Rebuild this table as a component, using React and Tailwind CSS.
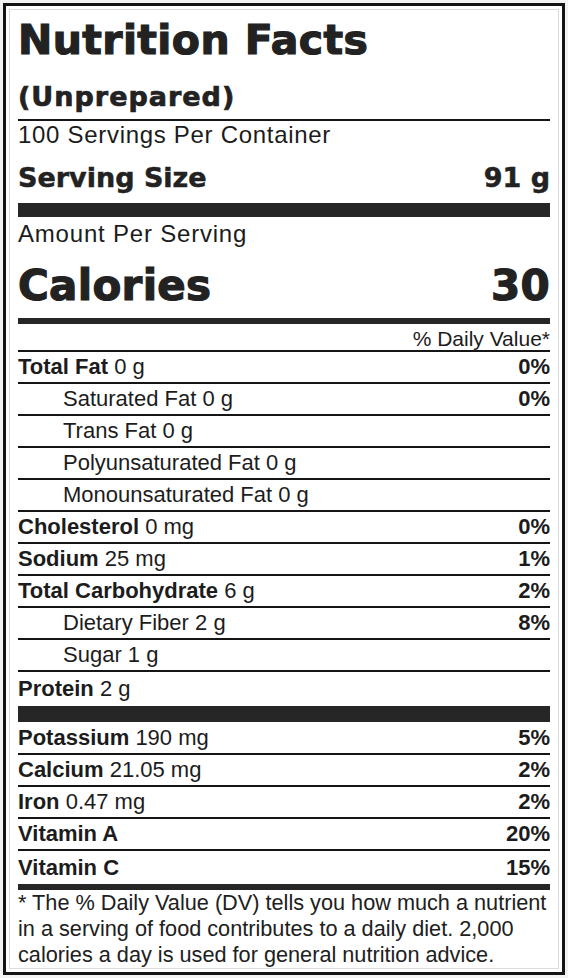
const rows = [
  { label: "Total Fat", amount: "0 g", dv: "0%" },
  { label: "Saturated Fat", amount: "0 g", dv: "0%", indent: true },
  { label: "Trans Fat", amount: "0 g", indent: true },
  { label: "Polyunsaturated Fat", amount: "0 g", indent: true },
  { label: "Monounsaturated Fat", amount: "0 g", indent: true },
  { label: "Cholesterol", amount: "0 mg", dv: "0%" },
  { label: "Sodium", amount: "25 mg", dv: "1%" },
  { label: "Total Carbohydrate", amount: "6 g", dv: "2%" },
  { label: "Dietary Fiber", amount: "2 g", dv: "8%", indent: true },
  { label: "Sugar", amount: "1 g", indent: true },
];

const minerals = [
  { label: "Potassium", amount: "190 mg", dv: "5%", h: "h-[33px] leading-[31px]" },
  { label: "Calcium", amount: "21.05 mg", dv: "2%" },
  { label: "Iron", amount: "0.47 mg", dv: "2%" },
  { label: "Vitamin A", dv: "20%" },
];

const heavy = { fontFamily: '"DejaVu Sans", "Liberation Sans", sans-serif' };
const body = { fontFamily: '"Liberation Sans", Arial, sans-serif' };

function Row({ r, cls = "h-[32px] leading-[30px]", border = true }) {
  return (
    <div
      className={`flex justify-between text-[22px] ${cls} ${
        border ? "border-b-2 border-[#151515]" : ""
      } ${r.indent ? "pl-[45px]" : ""}`}
    >
      <span className="whitespace-nowrap">
        {r.indent ? r.label : <span className="font-bold">{r.label}</span>}
        {r.amount ? " " + r.amount : ""}
      </span>
      {r.dv && <span className="font-bold">{r.dv}</span>}
    </div>
  );
}

export default function App() {
  return (
    <div className="w-[568px] h-[978px] bg-[#f3f3f3] p-[3px]" style={body}>
      <div className="h-full border-[3px] border-[#141414] bg-white p-[3px]">
        <div className="h-full border border-[#dcdcdc] bg-white px-[8px] text-[#1c1c1c]">
          <div
            className="h-[60px] text-[41px] leading-[60px] font-bold text-[#222] tracking-[0.4px] [-webkit-text-stroke:1.2px_#222]"
            style={heavy}
          >
            Nutrition Facts
          </div>
          <div
            className="h-[51px] pt-[4px] text-[27px] leading-[45px] font-bold text-[#222] tracking-[1px] border-b-2 border-[#151515] [-webkit-text-stroke:0.7px_#222]"
            style={heavy}
          >
            (Unprepared)
          </div>
          <div className="h-[28px] text-[24px] leading-[28px] tracking-[0.7px]">
            100 Servings Per Container
          </div>
          <div
            className="flex justify-between h-[54px] pt-[4px] text-[27px] leading-[50px] font-bold text-[#222] [-webkit-text-stroke:0.5px_#222]"
            style={heavy}
          >
            <span>Serving Size</span>
            <span>91 g</span>
          </div>
          <div className="h-[14px] bg-[#262626]" />
          <div className="h-[33px] text-[24px] leading-[33px] tracking-[0.8px]">
            Amount Per Serving
          </div>
          <div
            className="flex justify-between h-[68px] pt-[4px] text-[42px] leading-[64px] font-bold text-[#222] tracking-[0.3px] [-webkit-text-stroke:1.2px_#222]"
            style={heavy}
          >
            <span>Calories</span>
            <span>30</span>
          </div>
          <div className="h-[6px] bg-[#262626]" />
          <div className="h-[28px] pt-[3px] text-[21px] leading-[23px] text-right border-b-2 border-[#151515]">
            % Daily Value*
          </div>
          {rows.map((r, i) => (
            <Row key={i} r={r} />
          ))}
          <Row
            r={{ label: "Protein", amount: "2 g" }}
            cls="h-[34px] leading-[34px]"
            border={false}
          />
          <div className="h-[16px] bg-[#262626]" />
          {minerals.map((r, i) => (
            <Row key={i} r={r} cls={r.h || "h-[32px] leading-[30px]"} />
          ))}
          <Row
            r={{ label: "Vitamin C", dv: "15%" }}
            cls="h-[33px] leading-[33px]"
            border={false}
          />
          <div className="h-[6px] bg-[#262626]" />
          <div className="text-[21.7px] leading-[26px] text-[#202020]">
            <div className="whitespace-nowrap">
              * The % Daily Value (DV) tells you how much a nutrient
            </div>
            <div className="whitespace-nowrap">
              in a serving of food contributes to a daily diet. 2,000
            </div>
            <div className="whitespace-nowrap">
              calories a day is used for general nutrition advice.
            </div>
          </div>
        </div>
      </div>
    </div>
  );
}
